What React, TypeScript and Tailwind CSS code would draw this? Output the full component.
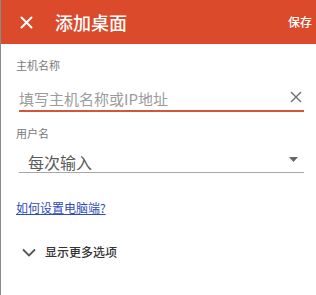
const font = { fontFamily: '"Noto Sans CJK SC", "Noto Sans", sans-serif' }

const App = () => {
  return (
    <div className="w-[316px] h-[295px] bg-white border-l border-[#8a8a8a] overflow-hidden" style={font}>
      <div className="h-[44px] bg-[#da4a2b] flex items-center text-white">
        <svg width="13" height="13" viewBox="0 0 13 13" className="ml-[19px]">
          <path d="M1.5 1.5 L11.5 11.5 M11.5 1.5 L1.5 11.5" stroke="#fff" strokeWidth="2" strokeLinecap="round" />
        </svg>
        <div className="ml-[22px] text-[18px] leading-none font-medium">添加桌面</div>
        <div className="ml-auto mr-[4px] text-[12px] leading-none font-medium">保存</div>
      </div>

      <div className="pl-[15px] pr-[12px]">
        <div className="mt-[14px] text-[11px] leading-[14px] text-[#7a7a7a]">主机名称</div>
        <div className="mt-[14px] ml-[3px] flex items-center h-[26px] border-b-2 border-[#d2573a]">
          <div className="text-[15px] leading-none text-[#9b9b9b]">填写主机名称或IP地址</div>
          <svg width="12" height="12" viewBox="0 0 12 12" className="ml-auto mr-[2px] mb-[2px]">
            <path d="M1 1 L11 11 M11 1 L1 11" stroke="#6e6e6e" strokeWidth="1.4" />
          </svg>
        </div>

        <div className="mt-[14px] text-[11px] leading-[14px] text-[#7a7a7a]">用户名</div>
        <div className="mt-[8px] ml-[3px] pt-[3px] flex items-center h-[25px] border-b border-[#a6a6a6]">
          <div className="ml-[9px] text-[16px] leading-none text-[#5a5a5a]">每次输入</div>
          <svg width="9" height="5" viewBox="0 0 9 5" className="ml-auto mr-[6px] mb-[4px]">
            <path d="M0 0 L9 0 L4.5 5 Z" fill="#666" />
          </svg>
        </div>

        <div className="mt-[27px] text-[12px] leading-[16px] text-[#2f4bb8] underline">如何设置电脑端?</div>

        <div className="mt-[30px] ml-[6px] flex items-center">
          <svg width="14" height="9" viewBox="0 0 14 9">
            <path d="M1 1.5 L7 7.5 L13 1.5" stroke="#555" strokeWidth="1.8" fill="none" />
          </svg>
          <div className="ml-[9px] text-[12px] leading-none font-medium text-[#333]">显示更多选项</div>
        </div>
      </div>
    </div>
  )
}

export default App
